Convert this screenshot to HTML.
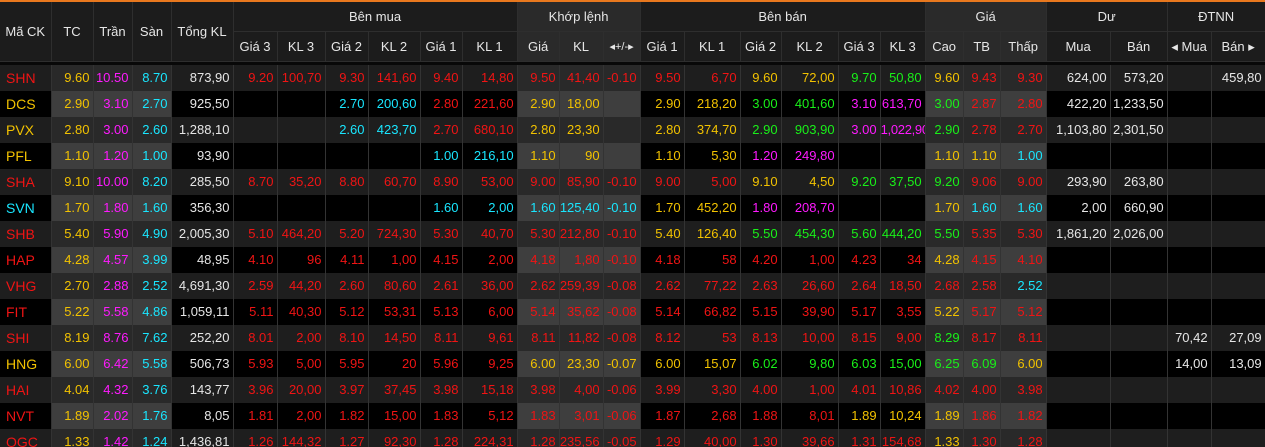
<!DOCTYPE html>
<html><head><meta charset="utf-8"><style>
html,body{margin:0;padding:0;background:#000;width:1265px;height:447px;overflow:hidden}
body{font-family:"Liberation Sans","DejaVu Sans",sans-serif;font-size:13px}
.top{height:2px;background:#e8781e}
table{border-collapse:collapse;table-layout:fixed;width:1265px}
th{color:#e6e6e6;font-weight:normal;font-size:13px;background:#1c1c1c;border-right:1px solid #2e2e2e;border-bottom:1px solid #2e2e2e;height:29px;padding:0;text-align:center;white-space:nowrap}
th.k{background:#2a2a2a}
.gap td{height:3px;background:#080808;padding:0;border:none}
td{height:26px;padding:0 3px 0 0;text-align:right;border-right:1px solid #333;white-space:nowrap;overflow:hidden;box-sizing:border-box}
td.n{padding-right:0;letter-spacing:-0.3px}
td:first-child{text-align:left;padding-left:6px;font-size:14px}
tr.o td{background:#1e1e1e}
tr.e td{background:#000}
tr.o td:nth-child(2),tr.o td:nth-child(3),tr.o td:nth-child(4),tr.o td:nth-child(12),tr.o td:nth-child(13),tr.o td:nth-child(14),tr.o td:nth-child(21),tr.o td:nth-child(22),tr.o td:nth-child(23){background:#292929}
tr.e td:nth-child(2),tr.e td:nth-child(3),tr.e td:nth-child(4),tr.e td:nth-child(12),tr.e td:nth-child(13),tr.e td:nth-child(14),tr.e td:nth-child(21),tr.e td:nth-child(22),tr.e td:nth-child(23){background:#3e3e3e}
.r{color:#f01414}.y{color:#f2c200}.m{color:#ff1aff}.c{color:#19e6ff}.g{color:#19f019}.w{color:#e6e6e6}
</style></head><body>
<div class="top"></div>
<table>
<colgroup><col style="width:51px"><col style="width:42px"><col style="width:39px"><col style="width:39px"><col style="width:62px"><col style="width:44px"><col style="width:48px"><col style="width:43px"><col style="width:52px"><col style="width:42px"><col style="width:55px"><col style="width:42px"><col style="width:44px"><col style="width:37px"><col style="width:44px"><col style="width:56px"><col style="width:41px"><col style="width:57px"><col style="width:42px"><col style="width:45px"><col style="width:38px"><col style="width:37px"><col style="width:46px"><col style="width:64px"><col style="width:57px"><col style="width:44px"><col style="width:54px"></colgroup>
<tr><th rowspan="2">Mã CK</th><th rowspan="2">TC</th><th rowspan="2">Trần</th><th rowspan="2">Sàn</th><th rowspan="2">Tổng KL</th><th colspan="6">Bên mua</th><th colspan="3" class="k">Khớp lệnh</th><th colspan="6">Bên bán</th><th colspan="3" class="k">Giá</th><th colspan="2">Dư</th><th colspan="2">ĐTNN</th></tr>
<tr><th>Giá 3</th><th>KL 3</th><th>Giá 2</th><th>KL 2</th><th>Giá 1</th><th>KL 1</th><th class="k">Giá</th><th class="k">KL</th><th class="k" style="font-size:11px">◂+/-▸</th><th>Giá 1</th><th>KL 1</th><th>Giá 2</th><th>KL 2</th><th>Giá 3</th><th>KL 3</th><th class="k">Cao</th><th class="k">TB</th><th class="k">Thấp</th><th>Mua</th><th>Bán</th><th>◂ Mua</th><th>Bán ▸</th></tr>
<tr class="gap"><td colspan="27"></td></tr>
<tr class="o"><td class="r">SHN</td><td class="y">9.60</td><td class="m">10.50</td><td class="c">8.70</td><td class="w">873,90</td><td class="r">9.20</td><td class="r">100,70</td><td class="r">9.30</td><td class="r">141,60</td><td class="r">9.40</td><td class="r">14,80</td><td class="r">9.50</td><td class="r">41,40</td><td class="r">-0.10</td><td class="r">9.50</td><td class="r">6,70</td><td class="y">9.60</td><td class="y">72,00</td><td class="g">9.70</td><td class="g">50,80</td><td class="y">9.60</td><td class="r">9.43</td><td class="r">9.30</td><td class="w">624,00</td><td class="w">573,20</td><td></td><td class="w">459,80</td></tr>
<tr class="e"><td class="y">DCS</td><td class="y">2.90</td><td class="m">3.10</td><td class="c">2.70</td><td class="w">925,50</td><td></td><td></td><td class="c">2.70</td><td class="c">200,60</td><td class="r">2.80</td><td class="r">221,60</td><td class="y">2.90</td><td class="y">18,00</td><td></td><td class="y">2.90</td><td class="y">218,20</td><td class="g">3.00</td><td class="g">401,60</td><td class="m">3.10</td><td class="m">613,70</td><td class="g">3.00</td><td class="r">2.87</td><td class="r">2.80</td><td class="w">422,20</td><td class="w">1,233,50</td><td></td><td></td></tr>
<tr class="o"><td class="y">PVX</td><td class="y">2.80</td><td class="m">3.00</td><td class="c">2.60</td><td class="w">1,288,10</td><td></td><td></td><td class="c">2.60</td><td class="c">423,70</td><td class="r">2.70</td><td class="r">680,10</td><td class="y">2.80</td><td class="y">23,30</td><td></td><td class="y">2.80</td><td class="y">374,70</td><td class="g">2.90</td><td class="g">903,90</td><td class="m">3.00</td><td class="m n">1,022,90</td><td class="g">2.90</td><td class="r">2.78</td><td class="r">2.70</td><td class="w">1,103,80</td><td class="w">2,301,50</td><td></td><td></td></tr>
<tr class="e"><td class="y">PFL</td><td class="y">1.10</td><td class="m">1.20</td><td class="c">1.00</td><td class="w">93,90</td><td></td><td></td><td></td><td></td><td class="c">1.00</td><td class="c">216,10</td><td class="y">1.10</td><td class="y">90</td><td></td><td class="y">1.10</td><td class="y">5,30</td><td class="m">1.20</td><td class="m">249,80</td><td></td><td></td><td class="y">1.10</td><td class="y">1.10</td><td class="c">1.00</td><td></td><td></td><td></td><td></td></tr>
<tr class="o"><td class="r">SHA</td><td class="y">9.10</td><td class="m">10.00</td><td class="c">8.20</td><td class="w">285,50</td><td class="r">8.70</td><td class="r">35,20</td><td class="r">8.80</td><td class="r">60,70</td><td class="r">8.90</td><td class="r">53,00</td><td class="r">9.00</td><td class="r">85,90</td><td class="r">-0.10</td><td class="r">9.00</td><td class="r">5,00</td><td class="y">9.10</td><td class="y">4,50</td><td class="g">9.20</td><td class="g">37,50</td><td class="g">9.20</td><td class="r">9.06</td><td class="r">9.00</td><td class="w">293,90</td><td class="w">263,80</td><td></td><td></td></tr>
<tr class="e"><td class="c">SVN</td><td class="y">1.70</td><td class="m">1.80</td><td class="c">1.60</td><td class="w">356,30</td><td></td><td></td><td></td><td></td><td class="c">1.60</td><td class="c">2,00</td><td class="c">1.60</td><td class="c">125,40</td><td class="c">-0.10</td><td class="y">1.70</td><td class="y">452,20</td><td class="m">1.80</td><td class="m">208,70</td><td></td><td></td><td class="y">1.70</td><td class="c">1.60</td><td class="c">1.60</td><td class="w">2,00</td><td class="w">660,90</td><td></td><td></td></tr>
<tr class="o"><td class="r">SHB</td><td class="y">5.40</td><td class="m">5.90</td><td class="c">4.90</td><td class="w">2,005,30</td><td class="r">5.10</td><td class="r">464,20</td><td class="r">5.20</td><td class="r">724,30</td><td class="r">5.30</td><td class="r">40,70</td><td class="r">5.30</td><td class="r">212,80</td><td class="r">-0.10</td><td class="y">5.40</td><td class="y">126,40</td><td class="g">5.50</td><td class="g">454,30</td><td class="g">5.60</td><td class="g">444,20</td><td class="g">5.50</td><td class="r">5.35</td><td class="r">5.30</td><td class="w">1,861,20</td><td class="w">2,026,00</td><td></td><td></td></tr>
<tr class="e"><td class="r">HAP</td><td class="y">4.28</td><td class="m">4.57</td><td class="c">3.99</td><td class="w">48,95</td><td class="r">4.10</td><td class="r">96</td><td class="r">4.11</td><td class="r">1,00</td><td class="r">4.15</td><td class="r">2,00</td><td class="r">4.18</td><td class="r">1,80</td><td class="r">-0.10</td><td class="r">4.18</td><td class="r">58</td><td class="r">4.20</td><td class="r">1,00</td><td class="r">4.23</td><td class="r">34</td><td class="y">4.28</td><td class="r">4.15</td><td class="r">4.10</td><td></td><td></td><td></td><td></td></tr>
<tr class="o"><td class="r">VHG</td><td class="y">2.70</td><td class="m">2.88</td><td class="c">2.52</td><td class="w">4,691,30</td><td class="r">2.59</td><td class="r">44,20</td><td class="r">2.60</td><td class="r">80,60</td><td class="r">2.61</td><td class="r">36,00</td><td class="r">2.62</td><td class="r">259,39</td><td class="r">-0.08</td><td class="r">2.62</td><td class="r">77,22</td><td class="r">2.63</td><td class="r">26,60</td><td class="r">2.64</td><td class="r">18,50</td><td class="r">2.68</td><td class="r">2.58</td><td class="c">2.52</td><td></td><td></td><td></td><td></td></tr>
<tr class="e"><td class="r">FIT</td><td class="y">5.22</td><td class="m">5.58</td><td class="c">4.86</td><td class="w">1,059,11</td><td class="r">5.11</td><td class="r">40,30</td><td class="r">5.12</td><td class="r">53,31</td><td class="r">5.13</td><td class="r">6,00</td><td class="r">5.14</td><td class="r">35,62</td><td class="r">-0.08</td><td class="r">5.14</td><td class="r">66,82</td><td class="r">5.15</td><td class="r">39,90</td><td class="r">5.17</td><td class="r">3,55</td><td class="y">5.22</td><td class="r">5.17</td><td class="r">5.12</td><td></td><td></td><td></td><td></td></tr>
<tr class="o"><td class="r">SHI</td><td class="y">8.19</td><td class="m">8.76</td><td class="c">7.62</td><td class="w">252,20</td><td class="r">8.01</td><td class="r">2,00</td><td class="r">8.10</td><td class="r">14,50</td><td class="r">8.11</td><td class="r">9,61</td><td class="r">8.11</td><td class="r">11,82</td><td class="r">-0.08</td><td class="r">8.12</td><td class="r">53</td><td class="r">8.13</td><td class="r">10,00</td><td class="r">8.15</td><td class="r">9,00</td><td class="g">8.29</td><td class="r">8.17</td><td class="r">8.11</td><td></td><td></td><td class="w">70,42</td><td class="w">27,09</td></tr>
<tr class="e"><td class="y">HNG</td><td class="y">6.00</td><td class="m">6.42</td><td class="c">5.58</td><td class="w">506,73</td><td class="r">5.93</td><td class="r">5,00</td><td class="r">5.95</td><td class="r">20</td><td class="r">5.96</td><td class="r">9,25</td><td class="y">6.00</td><td class="y">23,30</td><td class="y">-0.07</td><td class="y">6.00</td><td class="y">15,07</td><td class="g">6.02</td><td class="g">9,80</td><td class="g">6.03</td><td class="g">15,00</td><td class="g">6.25</td><td class="g">6.09</td><td class="y">6.00</td><td></td><td></td><td class="w">14,00</td><td class="w">13,09</td></tr>
<tr class="o"><td class="r">HAI</td><td class="y">4.04</td><td class="m">4.32</td><td class="c">3.76</td><td class="w">143,77</td><td class="r">3.96</td><td class="r">20,00</td><td class="r">3.97</td><td class="r">37,45</td><td class="r">3.98</td><td class="r">15,18</td><td class="r">3.98</td><td class="r">4,00</td><td class="r">-0.06</td><td class="r">3.99</td><td class="r">3,30</td><td class="r">4.00</td><td class="r">1,00</td><td class="r">4.01</td><td class="r">10,86</td><td class="r">4.02</td><td class="r">4.00</td><td class="r">3.98</td><td></td><td></td><td></td><td></td></tr>
<tr class="e"><td class="r">NVT</td><td class="y">1.89</td><td class="m">2.02</td><td class="c">1.76</td><td class="w">8,05</td><td class="r">1.81</td><td class="r">2,00</td><td class="r">1.82</td><td class="r">15,00</td><td class="r">1.83</td><td class="r">5,12</td><td class="r">1.83</td><td class="r">3,01</td><td class="r">-0.06</td><td class="r">1.87</td><td class="r">2,68</td><td class="r">1.88</td><td class="r">8,01</td><td class="y">1.89</td><td class="y">10,24</td><td class="y">1.89</td><td class="r">1.86</td><td class="r">1.82</td><td></td><td></td><td></td><td></td></tr>
<tr class="o"><td class="r">OGC</td><td class="y">1.33</td><td class="m">1.42</td><td class="c">1.24</td><td class="w">1,436,81</td><td class="r">1.26</td><td class="r">144,32</td><td class="r">1.27</td><td class="r">92,30</td><td class="r">1.28</td><td class="r">224,31</td><td class="r">1.28</td><td class="r">235,56</td><td class="r">-0.05</td><td class="r">1.29</td><td class="r">40,00</td><td class="r">1.30</td><td class="r">39,66</td><td class="r">1.31</td><td class="r">154,68</td><td class="y">1.33</td><td class="r">1.30</td><td class="r">1.28</td><td></td><td></td><td></td><td></td></tr>
</table>
</body></html>
